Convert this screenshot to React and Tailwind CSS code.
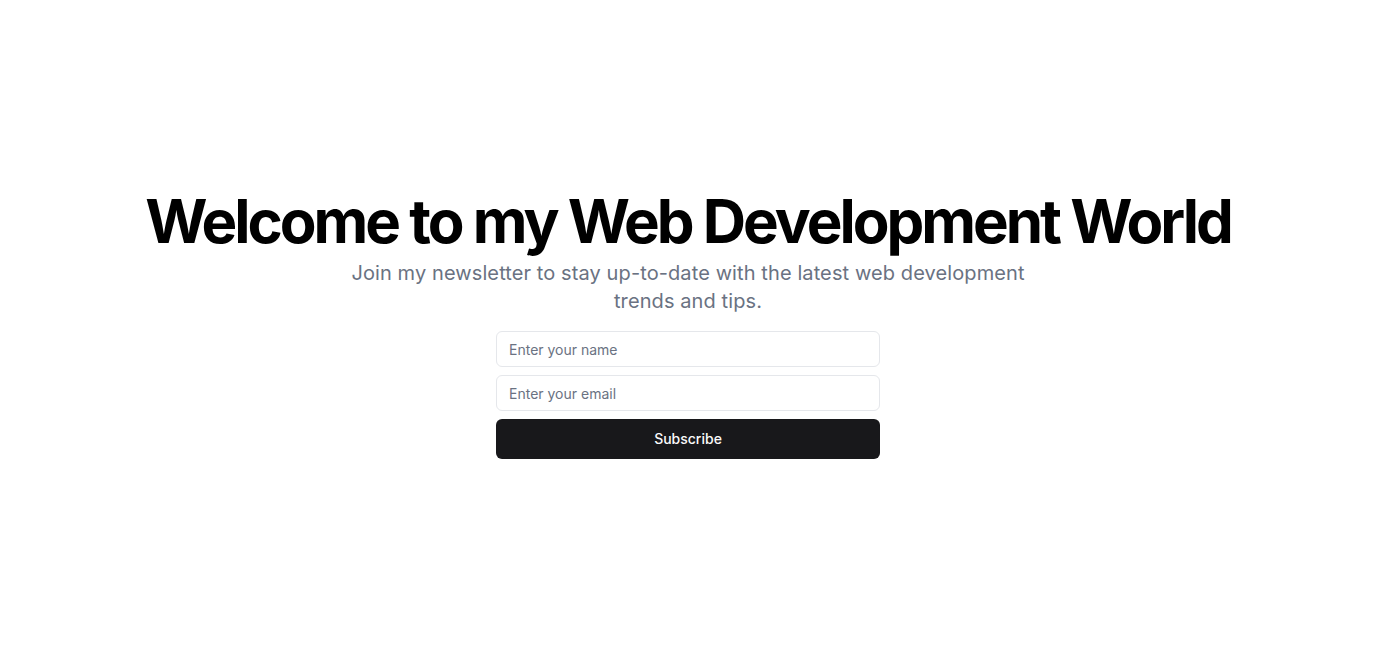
export default function App() {
  return (
    <div
      className="flex min-h-screen w-full items-center justify-center bg-white px-4"
      style={{ fontFamily: 'Inter, "Noto Sans", sans-serif' }}
    >
      <div className="flex flex-col items-center space-y-4 text-center">
        <div className="space-y-2">
          <h1 className="text-6xl font-bold tracking-tighter text-black">
            Welcome to my Web Development World
          </h1>
          <p className="mx-auto max-w-[700px] text-xl tracking-[0.1px] text-gray-500">
            Join my newsletter to stay up-to-date with the latest web development trends and tips.
          </p>
        </div>
        <form className="w-full max-w-sm space-y-2" onSubmit={e => e.preventDefault()}>
          <input
            type="text"
            placeholder="Enter your name"
            className="flex h-9 w-full rounded-md border border-gray-200 bg-white px-3 py-1 text-sm placeholder:text-gray-500 focus:outline-none"
          />
          <input
            type="email"
            placeholder="Enter your email"
            className="flex h-9 w-full rounded-md border border-gray-200 bg-white px-3 py-1 text-sm placeholder:text-gray-500 focus:outline-none"
          />
          <button
            type="submit"
            className="inline-flex h-10 w-full items-center justify-center rounded-md bg-[#18181b] px-4 text-sm font-medium text-[#fafafa]"
          >
            Subscribe
          </button>
        </form>
      </div>
    </div>
  );
}
